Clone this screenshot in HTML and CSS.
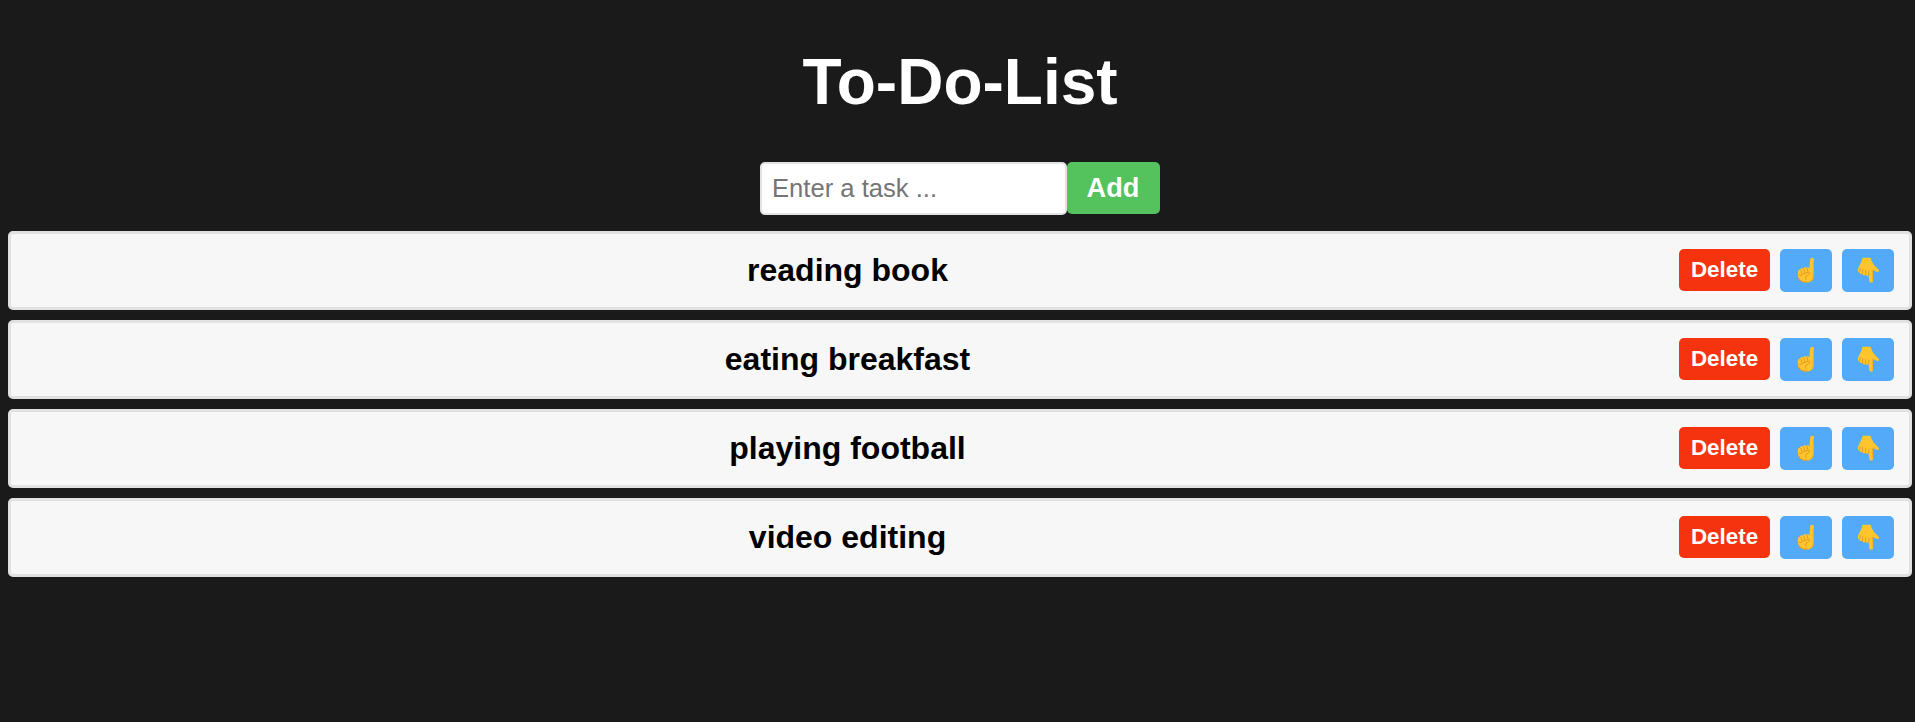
FILE: index.html
```html
<!DOCTYPE html>
<html lang="en">
<head>
<meta charset="utf-8">
<title>To-Do-List</title>
<link rel="stylesheet" href="styles.css">
</head>
<body>
<svg class="sprites" aria-hidden="true">
  <symbol id="hand-up" viewBox="0 0 52 43">
    <path fill="#ffc52c" d="M29.4 19.5 30.2 10.6C30.4 9.2 31.2 8.7 32.2 8.7 33.5 8.7 34 9.6 34 10.8L33.7 27.5C33.4 31 31.8 33.4 26.4 33.6 20.6 33.8 18.2 30.7 17.9 25.8 17.6 22.6 18.2 20.6 20 20.4 20.5 19.4 21.8 19 23 19.4 23.6 18.2 25.3 18 26.3 18.7 27.5 18 28.8 18.3 29.4 19.5Z"/>
    <path fill="none" stroke="#d99222" stroke-width=".9" stroke-linecap="round" d="M20.6 21.2C21.3 22 21.6 23 21.6 24.3M23.4 20C24.2 21 24.5 22 24.4 23.2M26.8 19.2C27.4 20 27.6 21 27.6 22M19 26.2C20 27 21.8 26.7 22.4 25.3L27.8 23.2C29.6 22.6 30.5 24.3 29.1 25.3L26 27.2C25.3 29 25.4 30 26.2 30.8M18.7 29C20 32.5 23.5 33.4 27 33.1"/>
    <path fill="none" stroke="#eba426" stroke-width=".7" d="M33.5 11.5 33.2 27C33 30 31.5 32.3 29.3 32.8"/>
  </symbol>
  <symbol id="hand-down" viewBox="0 0 52 43">
    <path fill="#ffc52c" d="M20.5 8.7H28.6Q29.5 12.5 31.8 15.8L36.7 20.8C37.6 22 36.8 23.4 35.3 23L30.9 21.2 31 31.4C31 33 30.3 33.7 29 33.6 27.8 33.6 27.3 32.8 27.2 31.5L26.6 25.9C25.7 27 24.3 27 23.6 26 22.5 26.9 20.7 26.4 20.2 25.1 18.9 25.5 17.5 24.8 17.4 23.5 16.2 23.3 15.6 22.3 15.8 20.8 16.2 18.1 18.5 14.8 19.6 12Z"/>
    <path fill="none" stroke="#dc9623" stroke-width=".8" stroke-linecap="round" d="M17.5 23.3 18.4 19.6M20.3 25 20.7 20.5M23.6 25.8 23.6 21.4M26.7 26 26.8 22.3M31 21.2 31.1 31.2"/>
  </symbol>
</svg>
<main class="todo">
  <h1 class="title">To-Do-List</h1>
  <div class="entry">
    <input class="task-input" type="text" placeholder="Enter a task ...">
    <button class="add-button">Add</button>
  </div>
  <ol class="tasks">
    <li class="task"><span class="text">reading book</span><button class="btn delete">Delete</button><button class="btn move" aria-label="Move up"><svg class="hand"><use href="#hand-up"/></svg></button><button class="btn move" aria-label="Move down"><svg class="hand"><use href="#hand-down"/></svg></button></li>
    <li class="task"><span class="text">eating breakfast</span><button class="btn delete">Delete</button><button class="btn move" aria-label="Move up"><svg class="hand"><use href="#hand-up"/></svg></button><button class="btn move" aria-label="Move down"><svg class="hand"><use href="#hand-down"/></svg></button></li>
    <li class="task"><span class="text">playing football</span><button class="btn delete">Delete</button><button class="btn move" aria-label="Move up"><svg class="hand"><use href="#hand-up"/></svg></button><button class="btn move" aria-label="Move down"><svg class="hand"><use href="#hand-down"/></svg></button></li>
    <li class="task"><span class="text">video editing</span><button class="btn delete">Delete</button><button class="btn move" aria-label="Move up"><svg class="hand"><use href="#hand-up"/></svg></button><button class="btn move" aria-label="Move down"><svg class="hand"><use href="#hand-down"/></svg></button></li>
  </ol>
</main>
</body>
</html>
```
FILE: styles.css
```css
* { box-sizing: border-box; }
body {
  margin: 0;
  background: #1a1a1a;
  font-family: "Liberation Sans", Arial, sans-serif;
}
.sprites { display: none; }
.todo { padding: 45px 3px 0 8px; }
.title {
  margin: 0 0 43px;
  color: #fff;
  font-size: 64px;
  line-height: 74px;
  text-align: center;
}
.entry {
  display: flex;
  justify-content: center;
  align-items: flex-start;
  margin-bottom: 16px;
}
.task-input {
  width: 307px;
  height: 53px;
  padding: 10px;
  border: 2px solid #e3e3e3;
  border-radius: 5px;
  background: #fff;
  font: 25.6px "Liberation Sans", Arial, sans-serif;
}
.task-input::placeholder { color: #757575; }
.add-button {
  width: 93px;
  height: 52px;
  padding: 0 1px 0 0;
  border: none;
  border-radius: 5px;
  background: #54c25d;
  color: #fff;
  font: bold 27.2px "Liberation Sans", Arial, sans-serif;
}
.tasks {
  display: grid;
  gap: 10px;
  margin: 0;
  padding: 0;
  list-style: none;
}
.task {
  display: flex;
  align-items: flex-start;
  gap: 10px;
  height: 79px;
  padding: 15px;
  border: 3px solid #e1e1e1;
  border-radius: 5px;
  background: #f7f7f7;
}
.text {
  flex: 1;
  color: #000;
  font-size: 32px;
  font-weight: bold;
  line-height: 43px;
  text-align: center;
}
.btn {
  padding: 0;
  border: none;
  border-radius: 5px;
  color: #fff;
  font: bold 22.4px "Liberation Sans", Arial, sans-serif;
}
.delete {
  width: 91px;
  height: 42px;
  background: #f5330f;
}
.move {
  width: 52px;
  height: 43px;
  background: #52aaf8;
}
.hand {
  display: block;
  width: 52px;
  height: 43px;
}
```
